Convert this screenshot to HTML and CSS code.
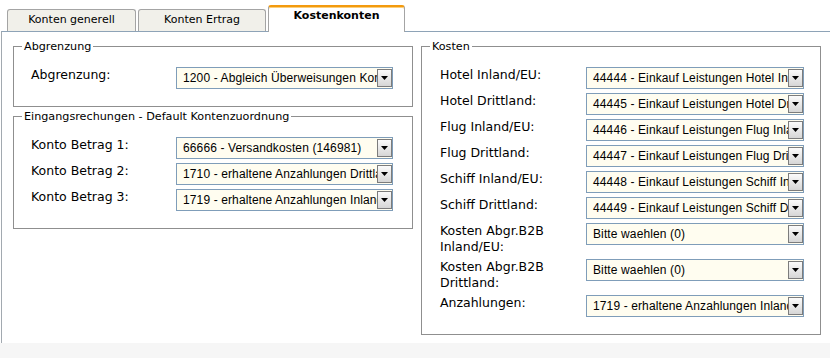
FILE: index.html
```html
<!DOCTYPE html>
<html lang="de">
<head>
<meta charset="utf-8">
<title>Kostenkonten</title>
<link rel="stylesheet" href="styles.css">
</head>
<body>
<div class="tabs">
  <div class="tab">Konten generell</div>
  <div class="tab tab-narrow">Konten Ertrag</div>
  <div class="tab active">Kostenkonten</div>
</div>
<div class="panel">
  <div class="col">
    <fieldset class="box">
      <legend>Abgrenzung</legend>
      <div class="rows rows-left">
        <div class="row"><label>Abgrenzung:</label><div class="select"><span class="value">1200 - Abgleich Überweisungen Kontoauszug</span><span class="arrow"><svg width="7" height="4" viewBox="0 0 7 4"><polygon points="0,0 7,0 3.5,4" fill="#000"/></svg></span></div></div>
      </div>
    </fieldset>
    <fieldset class="box">
      <legend>Eingangsrechungen - Default Kontenzuordnung</legend>
      <div class="rows rows-left">
        <div class="row"><label>Konto Betrag 1:</label><div class="select"><span class="value">66666 - Versandkosten (146981)</span><span class="arrow"><svg width="7" height="4" viewBox="0 0 7 4"><polygon points="0,0 7,0 3.5,4" fill="#000"/></svg></span></div></div>
        <div class="row"><label>Konto Betrag 2:</label><div class="select"><span class="value">1710 - erhaltene Anzahlungen Drittland</span><span class="arrow"><svg width="7" height="4" viewBox="0 0 7 4"><polygon points="0,0 7,0 3.5,4" fill="#000"/></svg></span></div></div>
        <div class="row"><label>Konto Betrag 3:</label><div class="select"><span class="value">1719 - erhaltene Anzahlungen Inland</span><span class="arrow"><svg width="7" height="4" viewBox="0 0 7 4"><polygon points="0,0 7,0 3.5,4" fill="#000"/></svg></span></div></div>
      </div>
    </fieldset>
  </div>
  <fieldset class="box">
    <legend>Kosten</legend>
    <div class="rows rows-right">
      <div class="row"><label>Hotel Inland/EU:</label><div class="select"><span class="value">44444 - Einkauf Leistungen Hotel Inland/EU</span><span class="arrow"><svg width="7" height="4" viewBox="0 0 7 4"><polygon points="0,0 7,0 3.5,4" fill="#000"/></svg></span></div></div>
      <div class="row"><label>Hotel Drittland:</label><div class="select"><span class="value">44445 - Einkauf Leistungen Hotel Drittland</span><span class="arrow"><svg width="7" height="4" viewBox="0 0 7 4"><polygon points="0,0 7,0 3.5,4" fill="#000"/></svg></span></div></div>
      <div class="row"><label>Flug Inland/EU:</label><div class="select"><span class="value">44446 - Einkauf Leistungen Flug Inland/EU</span><span class="arrow"><svg width="7" height="4" viewBox="0 0 7 4"><polygon points="0,0 7,0 3.5,4" fill="#000"/></svg></span></div></div>
      <div class="row"><label>Flug Drittland:</label><div class="select"><span class="value">44447 - Einkauf Leistungen Flug Drittland</span><span class="arrow"><svg width="7" height="4" viewBox="0 0 7 4"><polygon points="0,0 7,0 3.5,4" fill="#000"/></svg></span></div></div>
      <div class="row"><label>Schiff Inland/EU:</label><div class="select"><span class="value">44448 - Einkauf Leistungen Schiff Inland/EU</span><span class="arrow"><svg width="7" height="4" viewBox="0 0 7 4"><polygon points="0,0 7,0 3.5,4" fill="#000"/></svg></span></div></div>
      <div class="row"><label>Schiff Drittland:</label><div class="select"><span class="value">44449 - Einkauf Leistungen Schiff Drittland</span><span class="arrow"><svg width="7" height="4" viewBox="0 0 7 4"><polygon points="0,0 7,0 3.5,4" fill="#000"/></svg></span></div></div>
      <div class="row"><label>Kosten Abgr.B2B<br>Inland/EU:</label><div class="select"><span class="value">Bitte waehlen (0)</span><span class="arrow"><svg width="7" height="4" viewBox="0 0 7 4"><polygon points="0,0 7,0 3.5,4" fill="#000"/></svg></span></div></div>
      <div class="row"><label>Kosten Abgr.B2B<br>Drittland:</label><div class="select"><span class="value">Bitte waehlen (0)</span><span class="arrow"><svg width="7" height="4" viewBox="0 0 7 4"><polygon points="0,0 7,0 3.5,4" fill="#000"/></svg></span></div></div>
      <div class="row"><label>Anzahlungen:</label><div class="select"><span class="value">1719 - erhaltene Anzahlungen Inland</span><span class="arrow"><svg width="7" height="4" viewBox="0 0 7 4"><polygon points="0,0 7,0 3.5,4" fill="#000"/></svg></span></div></div>
    </div>
  </fieldset>
</div>
<div class="footer"></div>
</body>
</html>
```
FILE: styles.css
```css
html, body {
  margin: 0;
  padding: 0;
  background: #fff;
}
body {
  width: 830px;
  height: 358px;
  overflow: hidden;
  font-family: "DejaVu Sans", Verdana, sans-serif;
  color: #000;
}

/* Tabs */
.tabs {
  display: flex;
  align-items: flex-end;
  gap: 2px;
  height: 31px;
  padding-left: 7px;
  box-sizing: border-box;
}
.tab {
  width: 129px;
  height: 22px;
  box-sizing: border-box;
  border: 1px solid #a4a4a4;
  border-bottom: none;
  border-radius: 3px 3px 0 0;
  background: #f1f0ea;
  font-size: 11px;
  line-height: 14px;
  padding-top: 3px;
  text-align: center;
  color: #000;
}
.tab-narrow {
  width: 128px;
}
.tab.active {
  position: relative;
  z-index: 1;
  width: 137px;
  height: 27px;
  margin-bottom: -1px;
  background: #fff;
  border-top: 2px solid #f39a0e;
  box-shadow: inset 0 1px 0 #fbcf7c;
  padding-top: 2px;
  font-weight: bold;
  color: #000;
}

/* Panel */
.panel {
  display: flex;
  align-items: flex-start;
  gap: 8px;
  margin-left: 1px;
  height: 312px;
  box-sizing: border-box;
  border-top: 1px solid #8ea3b7;
  border-left: 1px solid #a2a9b0;
  padding: 8px 0 8px 11px;
}
.col {
  display: flex;
  flex-direction: column;
  gap: 3px;
  width: 400px;
}
.box {
  margin: 0;
  padding: 0;
  width: 400px;
  min-width: 0;
  box-sizing: border-box;
  border: 1px solid #8f8f8f;
}
.box legend {
  font-size: 11.2px;
  line-height: 13px;
  padding: 0 2px;
  margin-left: 8px;
  color: #000;
}

.rows {
  display: flex;
  flex-direction: column;
  padding-top: 12px;
  padding-bottom: 15px;
}
.rows-left {
  padding-left: 17px;
}
.rows-right {
  padding-left: 18px;
}
.row {
  display: grid;
  align-items: start;
  padding: 2px 0;
}
.rows-left .row {
  grid-template-columns: 145px 217px;
}
.rows-right .row {
  grid-template-columns: 146px 218px;
}
.row label {
  font-size: 12.5px;
  line-height: 16px;
  color: #000;
}

/* Select box */
.select {
  display: flex;
  height: 22px;
  box-sizing: border-box;
  border: 1px solid #7f9db9;
  background: #fffdf0;
}
.value {
  flex: 1;
  overflow: hidden;
  white-space: nowrap;
  padding-left: 6px;
  font-family: "Liberation Sans", Arial, sans-serif;
  font-size: 12px;
  letter-spacing: 0.12px;
  line-height: 20px;
  color: #000;
}
.arrow {
  flex: none;
  display: flex;
  align-items: center;
  justify-content: center;
  width: 15px;
  margin: 1px 0;
  box-sizing: border-box;
  border: 1px solid #7c7c7c;
  background: linear-gradient(#fbfbfb, #d6d6d6);
}

.footer {
  height: 15px;
  background: #f6f6f6;
}
```
